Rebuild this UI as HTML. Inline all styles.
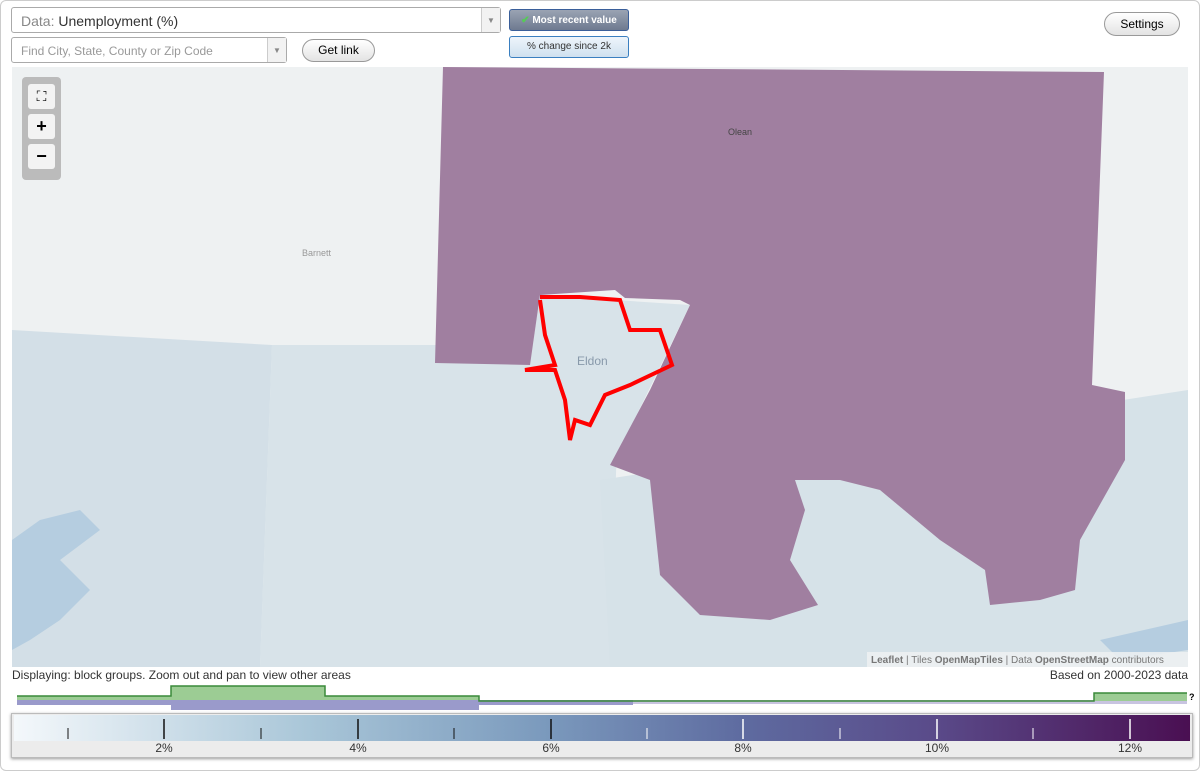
<!DOCTYPE html><html><head><style>
body{margin:0;width:1200px;height:771px;background:#fff;font-family:"Liberation Sans",sans-serif;position:relative;overflow:hidden}
.frame{position:absolute;left:0;top:0;width:1198px;height:769px;border:1px solid #ccc;border-radius:6px}
.sel{position:absolute;border:1px solid #aaa;border-radius:3px;background:#fff;font-size:14px;color:#333;box-sizing:border-box}
.arr{position:absolute;right:0;top:0;bottom:0;width:18px;border-left:1px solid #ccc;background:#f2f2f2;color:#888;font-size:8px;text-align:center}
.btn{position:absolute;border:1px solid #999;border-radius:12px;background:linear-gradient(#fff,#e3e3e3);font-size:12px;text-align:center;box-sizing:border-box}
.t{position:absolute;font-size:12px;color:#333}
</style></head><body><div class="frame"></div>
<div class="sel" style="left:11px;top:7px;width:490px;height:26px;padding:5px 9px"><span style="color:#888">Data:</span> Unemployment (%)<div class="arr" style="line-height:26px">▼</div></div>
<div class="sel" style="left:11px;top:37px;width:276px;height:26px;padding:6px 9px;font-size:12px;color:#999">Find City, State, County or Zip Code<div class="arr" style="line-height:26px">▼</div></div>
<div class="btn" style="left:302px;top:39px;width:73px;height:23px;line-height:21px">Get link</div>
<div style="position:absolute;left:509px;top:9px;width:120px;height:22px;border:1px solid #3a5f9a;border-radius:3px;background:linear-gradient(#9aa3b3,#6e7a90);color:#fff;font-size:10px;font-weight:bold;line-height:22px;text-align:center;box-sizing:border-box"><span style="color:#5c5">✔</span> Most recent value</div>
<div style="position:absolute;left:509px;top:36px;width:120px;height:22px;border:1px solid #3a7fc0;border-radius:3px;background:linear-gradient(#eef5fb,#cfe0ef);color:#333;font-size:10px;line-height:20px;text-align:center;box-sizing:border-box">% change since 2k</div>
<div class="btn" style="left:1104px;top:12px;width:76px;height:24px;line-height:22px">Settings</div>
<svg style="position:absolute;left:12px;top:67px" width="1176" height="600" viewBox="12 67 1176 600">
<rect x="12" y="67" width="1176" height="600" fill="#eef1f2"/>
<polygon points="272,345 620,345 610,667 260,667" fill="#d8e3e9"/>
<polygon points="540,295 690,305 610,470 530,365" fill="#d8e3e9"/>
<polygon points="12,330 272,345 260,667 12,667" fill="#d3dfe7"/>
<polygon points="600,480 1188,390 1188,667 610,667" fill="#d6e2e8"/>
<path d="M12,540 L40,520 L80,510 L100,530 L60,560 L90,590 L60,620 L30,640 L12,650Z" fill="#b5cde0"/>
<path d="M1100,640 L1188,620 L1188,650 L1120,660Z" fill="#b5cde0"/>
<polygon points="443,67 1104,72 1092,385 1125,392 1125,460 1080,540 1075,590 1040,600 990,605 985,570 940,540 880,490 840,480 795,480 805,510 790,560 818,605 770,620 700,615 660,575 650,480 610,465 650,390 690,305 680,300 625,298 615,290 540,295 530,365 435,363" fill="#a07fa0"/>
<polyline points="540,297 580,297 620,300 630,330 660,330 672,365 630,385 605,395 590,425 575,420 570,440 565,400 555,370 525,370 555,365 545,335 540,300" fill="none" stroke="#f00" stroke-width="4"/>
<text x="577" y="365" font-size="12" fill="#8899aa" font-family="Liberation Sans">Eldon</text>
<text x="728" y="135" font-size="9" fill="#444" font-family="Liberation Sans">Olean</text>
<text x="302" y="256" font-size="9" fill="#999" font-family="Liberation Sans">Barnett</text>
<rect x="867" y="652" width="321" height="15" fill="#eef1f2" opacity=".85"/>
<text x="871" y="663" font-size="10" fill="#777" font-family="Liberation Sans"><tspan font-weight="bold">Leaflet</tspan> | Tiles <tspan font-weight="bold">OpenMapTiles</tspan> | Data <tspan font-weight="bold">OpenStreetMap</tspan> contributors</text>
</svg>
<div style="position:absolute;left:22px;top:77px;width:39px;height:103px;background:#bbb;border-radius:4px"></div>
<div style="position:absolute;left:28px;top:84px;width:27px;height:25px;background:#f3f3f3;border-radius:3px;text-align:center;font-size:14px;line-height:25px">⛶</div>
<div style="position:absolute;left:28px;top:114px;width:27px;height:25px;background:#f3f3f3;border-radius:3px;text-align:center;font-size:18px;font-weight:bold;line-height:25px">+</div>
<div style="position:absolute;left:28px;top:144px;width:27px;height:25px;background:#f3f3f3;border-radius:3px;text-align:center;font-size:18px;font-weight:bold;line-height:24px">−</div>
<div class="t" style="left:12px;top:668px">Displaying: block groups. Zoom out and pan to view other areas</div>
<div class="t" style="right:12px;top:668px">Based on 2000-2023 data</div>
<svg style="position:absolute;left:0;top:684px" width="1200" height="30">
<rect x="17" y="16" width="1170" height="4" fill="#c8c4e0"/>
<rect x="17" y="16" width="616" height="5" fill="#9a9acb"/>
<rect x="171" y="16" width="308" height="10" fill="#9a9acb"/>
<polygon points="17,17 17,12 171,12 171,2 325,2 325,12 479,12 479,16 17,16" fill="#9ccc94"/>
<polygon points="1094,17 1094,9 1187,9 1187,17" fill="#9ccc94"/>
<polyline points="17,12 171,12 171,2 325,2 325,12 479,12 479,17 1094,17 1094,9 1187,9" fill="none" stroke="#3a8a3a" stroke-width="1.5"/>
<text x="1189" y="16" font-size="9" font-weight="bold">?</text></svg>
<div style="position:absolute;left:11px;top:713px;width:1180px;height:43px;border:1px solid #bbb;box-shadow:0 1px 3px #999;background:#ececec">
<div style="position:absolute;left:2px;top:1px;width:1176px;height:26px;background:linear-gradient(90deg,#f4f8fb,#a9c6d8 25%,#7b9abd 45%,#5e6ba0 62%,#5a4b8a 78%,#4a0f52)"></div>
<svg style="position:absolute;left:0;top:0" width="1180" height="43">
<g stroke="#111" stroke-width="1.5"><line x1="56" y1="14" x2="56" y2="25" stroke-width="1"/><line x1="152" y1="5" x2="152" y2="25"/><line x1="249" y1="14" x2="249" y2="25" stroke-width="1"/><line x1="346" y1="5" x2="346" y2="25"/><line x1="442" y1="14" x2="442" y2="25" stroke-width="1"/><line x1="539" y1="5" x2="539" y2="25"/></g>
<g stroke="#fff" stroke-width="1.5"><line x1="635" y1="14" x2="635" y2="25" stroke-width="1"/><line x1="731" y1="5" x2="731" y2="25"/><line x1="828" y1="14" x2="828" y2="25" stroke-width="1"/><line x1="925" y1="5" x2="925" y2="25"/><line x1="1021" y1="14" x2="1021" y2="25" stroke-width="1"/><line x1="1118" y1="5" x2="1118" y2="25"/></g>
<g font-size="12" fill="#333" text-anchor="middle" font-family="Liberation Sans"><text x="152" y="38">2%</text><text x="346" y="38">4%</text><text x="539" y="38">6%</text><text x="731" y="38">8%</text><text x="925" y="38">10%</text><text x="1118" y="38">12%</text></g></svg></div>
</body></html>
